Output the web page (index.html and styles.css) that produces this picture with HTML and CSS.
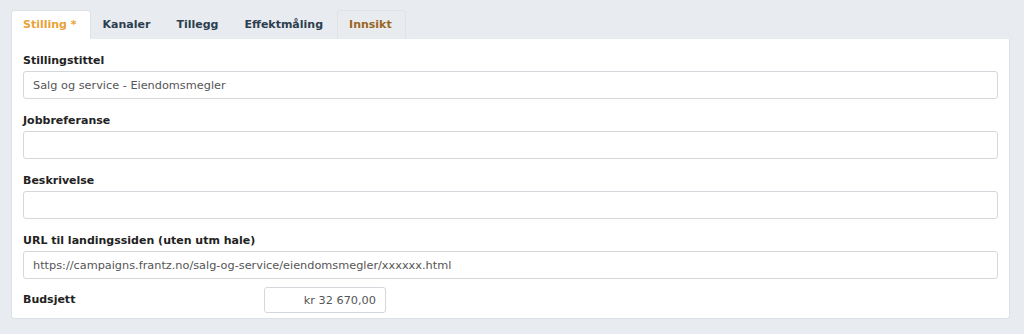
FILE: index.html
```html
<!DOCTYPE html>
<html lang="no">
<head>
<meta charset="UTF-8">
<meta name="viewport" content="width=device-width, initial-scale=1.0">
<title>Stilling</title>
<link rel="stylesheet" href="styles.css">
</head>
<body>
<div class="page">
    <ul class="tabs">
        <li class="tab active">Stilling *</li>
        <li class="tab">Kanaler</li>
        <li class="tab">Tillegg</li>
        <li class="tab">Effektmåling</li>
        <li class="tab insight">Innsikt</li>
    </ul>

    <div class="panel">
        <div class="field">
            <label for="title">Stillingstittel</label>
            <input type="text" id="title" value="Salg og service - Eiendomsmegler">
        </div>
        <div class="field">
            <label for="ref">Jobbreferanse</label>
            <input type="text" id="ref">
        </div>
        <div class="field">
            <label for="desc">Beskrivelse</label>
            <input type="text" id="desc">
        </div>
        <div class="field">
            <label for="url">URL til landingssiden (uten utm hale)</label>
            <input type="text" id="url" value="https://campaigns.frantz.no/salg-og-service/eiendomsmegler/xxxxxx.html">
        </div>
        <div class="field budget">
            <label for="budget">Budsjett</label>
            <input type="text" id="budget" value="kr 32 670,00">
        </div>
    </div>
</div>
</body>
</html>
```

FILE: styles.css
```css
body {
    margin: 0;
    background-color: #e8ebef;
    font-family: "DejaVu Sans", Arial, sans-serif;
    color: #212529;
}

.page {
    padding: 10px 14px 0 11px;
}

.tabs {
    display: flex;
    list-style: none;
    margin: 0;
    padding: 0;
    height: 29px;
}

.tab {
    padding: 0 13px 0 11px;
    line-height: 28px;
    font-size: 11px;
    font-weight: bold;
    color: #2c3e50;
    border: 1px solid transparent;
    border-bottom: none;
    border-radius: 3px 3px 0 0;
}

.tab.active {
    color: #eaa236;
    background-color: #fff;
    border-color: #dee2e6;
}

.tab.insight {
    color: #98661f;
    background-color: #e9ecef;
    border-color: #dfe2e6;
}

.panel {
    background-color: #fff;
    border: 1px solid #dee2e6;
    border-top: none;
    border-radius: 0 0 3px 3px;
    padding: 11px 11px 0 11px;
    height: 268px;
}

.field + .field {
    margin-top: 11px;
}

.field label {
    display: block;
    font-size: 11px;
    font-weight: bold;
    color: #222;
    line-height: 14px;
    padding: 4px 0 3px 0;
}

.field input {
    display: block;
    box-sizing: border-box;
    width: 100%;
    height: 28px;
    padding: 0 9px;
    border: 1px solid #d4d7dc;
    border-radius: 3px;
    font-family: inherit;
    font-size: 11.3px;
    color: #555;
}

.field.budget {
    display: flex;
    align-items: center;
    margin-top: 8px;
}

.field.budget label {
    width: 241px;
    padding: 0;
}

.field.budget input {
    width: 122px;
    height: 26px;
    text-align: right;
}
```
